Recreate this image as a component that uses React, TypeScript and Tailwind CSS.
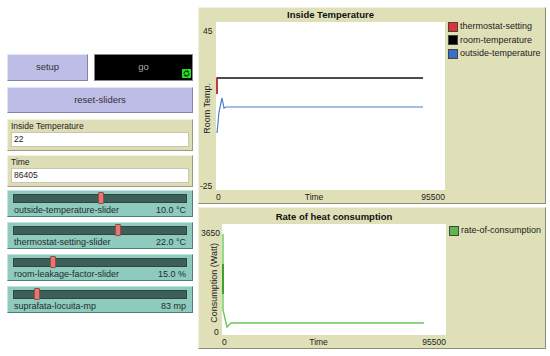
import React from 'react';

const font = { fontFamily: '"Liberation Sans", Arial, sans-serif' };

/** 按钮 */
const NlButton = ({ label, className }: { label: string; className?: string }) => (
  <div
    className={`flex items-center justify-center bg-[#bdbde8] border border-t-[#e4e4f6] border-l-[#e4e4f6] border-r-[#8484a8] border-b-[#8484a8] text-[9.5px] text-[#333] ${className ?? ''}`}
  >
    {label}
  </div>
);

/** 监视器 */
const Monitor = ({ label, value }: { label: string; value: string }) => (
  <div className="h-[32px] bg-[#dedeb6] border border-t-[#f0f0dc] border-l-[#f0f0dc] border-r-[#9c9c80] border-b-[#9c9c80] px-[3px] pt-[1px]">
    <div className="text-[8.5px] leading-[11px] text-[#222]">{label}</div>
    <div className="h-[15px] bg-white border border-[#c8c8b0] text-[8.5px] leading-[13px] px-[2px] text-[#222]">
      {value}
    </div>
  </div>
);

/** 滑块 */
const Slider = ({ label, value, pos }: { label: string; value: string; pos: number }) => (
  <div className="relative h-[27px] bg-[#8ecabe] border border-t-[#c4e8e0] border-l-[#c4e8e0] border-r-[#4e7e74] border-b-[#4e7e74] px-[5px] pt-[3px]">
    <div className="h-[9px] bg-[#3e5f58] border border-[#2c4640]" />
    <div
      className="absolute top-[1px] w-[6px] h-[12px] bg-[#e07a70] border border-[#a04840] rounded-[1px]"
      style={{ left: pos }}
    />
    <div className="flex justify-between text-[9px] leading-[12px] mt-[1px] px-[1px] text-[#1e2e2a]">
      <span>{label}</span>
      <span>{value}</span>
    </div>
  </div>
);

const LegendItem = ({ color, label }: { color: string; label: string }) => (
  <div className="flex items-center gap-[2px] h-[13.5px]">
    <div className="w-[10px] h-[10px] border border-[#444]" style={{ backgroundColor: color }} />
    <span className="text-[9px] text-[#222]">{label}</span>
  </div>
);

export default function App() {
  return (
    <div className="w-[550px] h-[356px] bg-white flex overflow-hidden" style={font}>
      {/* 左侧控件 */}
      <div className="w-[186px] ml-[7px] pt-[54px] flex flex-col">
        <div className="flex gap-[6px] h-[27px]">
          <NlButton label="setup" className="w-[81px] h-full" />
          <div className="relative flex-1 bg-black border border-[#888] flex items-center justify-center text-[9.5px] text-[#aaa]">
            go
            <svg className="absolute right-[1px] bottom-[2px]" width="9" height="9" viewBox="0 0 9 9">
              <rect width="9" height="9" fill="#22dd22" />
              <path d="M2 4.5 A2.5 2.5 0 0 1 6.5 3" stroke="#000" strokeWidth="1" fill="none" />
              <path d="M7 4.5 A2.5 2.5 0 0 1 2.5 6" stroke="#000" strokeWidth="1" fill="none" />
              <path d="M5.5 1.5 L7 3 L5.2 3.6Z" fill="#000" />
              <path d="M3.5 7.5 L2 6 L3.8 5.4Z" fill="#000" />
            </svg>
          </div>
        </div>
        <NlButton label="reset-sliders" className="h-[26px] mt-[6px]" />
        <div className="mt-[6px]">
          <Monitor label="Inside Temperature" value="22" />
        </div>
        <div className="mt-[4px]">
          <Monitor label="Time" value="86405" />
        </div>
        <div className="mt-[3px] flex flex-col gap-[5px]">
          <Slider label="outside-temperature-slider" value="10.0 °C" pos={90} />
          <Slider label="thermostat-setting-slider" value="22.0 °C" pos={107} />
          <Slider label="room-leakage-factor-slider" value="15.0 %" pos={42} />
          <Slider label="suprafata-locuita-mp" value="83 mp" pos={26} />
        </div>
      </div>

      {/* 右侧图表 */}
      <div className="w-[348px] ml-[5px] pt-[7px] flex flex-col gap-[3px]">
        {/* Inside Temperature */}
        <div className="h-[197px] bg-[#e0e0b8] border border-t-[#f2f2de] border-l-[#f2f2de] border-r-[#8e8e78] border-b-[#8e8e78] flex">
          <div className="w-[17px] flex flex-col text-[8.5px] text-[#222] pt-[18px]">
            <div className="h-[10px] leading-[10px] pl-[4px]">45</div>
            <div className="flex-1 flex items-center justify-center">
              <span className="[writing-mode:vertical-rl] rotate-180 text-[9px]">Room Temp.</span>
            </div>
            <div className="h-[10px] leading-[10px] pl-[1px] mb-[12px]">-25</div>
          </div>
          <div className="w-[229px] flex flex-col">
            <div className="h-[14px] text-center font-bold text-[9.5px] leading-[14px] text-[#111]">
              Inside Temperature
            </div>
            <svg width="229" height="170" className="bg-white block">
              <polyline points="1,111 3,90 6,76 8,86 10,85 207,85" fill="none" stroke="#4a7fd0" strokeWidth="1.2" />
              <polyline points="1,72 1,56 207,56" fill="none" stroke="#111" strokeWidth="1.3" />
              <line x1="1" y1="72" x2="1" y2="56" stroke="#d83030" strokeWidth="1.5" />
            </svg>
            <div className="flex justify-between text-[8.5px] leading-[12px] text-[#222] pt-[1px]">
              <span className="pl-[0px]">0</span>
              <span className="-ml-[14px]">Time</span>
              <span>95500</span>
            </div>
          </div>
          <div className="pl-[3px] pt-[12px]">
            <LegendItem color="#dd3333" label="thermostat-setting" />
            <LegendItem color="#000000" label="room-temperature" />
            <LegendItem color="#3d6fc8" label="outside-temperature" />
          </div>
        </div>

        {/* Rate of heat consumption */}
        <div className="h-[142px] bg-[#e0e0b8] border border-t-[#f2f2de] border-l-[#f2f2de] border-r-[#8e8e78] border-b-[#8e8e78] flex">
          <div className="w-[23px] flex flex-col text-[8.5px] text-[#222] pt-[20px]">
            <div className="h-[10px] leading-[10px] pl-[2px]">3650</div>
            <div className="flex-1 flex items-center justify-end pr-[1px]">
              <span className="[writing-mode:vertical-rl] rotate-180 text-[9px]">Consumption (Watt)</span>
            </div>
            <div className="h-[10px] leading-[10px] pl-[15px] mb-[11px]">0</div>
          </div>
          <div className="w-[224px] flex flex-col">
            <div className="h-[14px] mt-[2px] text-center font-bold text-[9.5px] leading-[14px] text-[#111]">
              Rate of heat consumption
            </div>
            <svg width="224" height="113" className="bg-white block">
              <polyline points="1,10 1,86 5,103 9,99 202,99" fill="none" stroke="#6cc95a" strokeWidth="1.4" />
              <line x1="1" y1="40" x2="1" y2="70" stroke="#3ea02e" strokeWidth="2" />
            </svg>
            <div className="flex justify-between text-[8.5px] leading-[12px] text-[#222] pt-[1px]">
              <span>0</span>
              <span className="-ml-[12px]">Time</span>
              <span>95500</span>
            </div>
          </div>
          <div className="pl-[3px] pt-[16px]">
            <LegendItem color="#5cb84a" label="rate-of-consumption" />
          </div>
        </div>
      </div>
    </div>
  );
}
